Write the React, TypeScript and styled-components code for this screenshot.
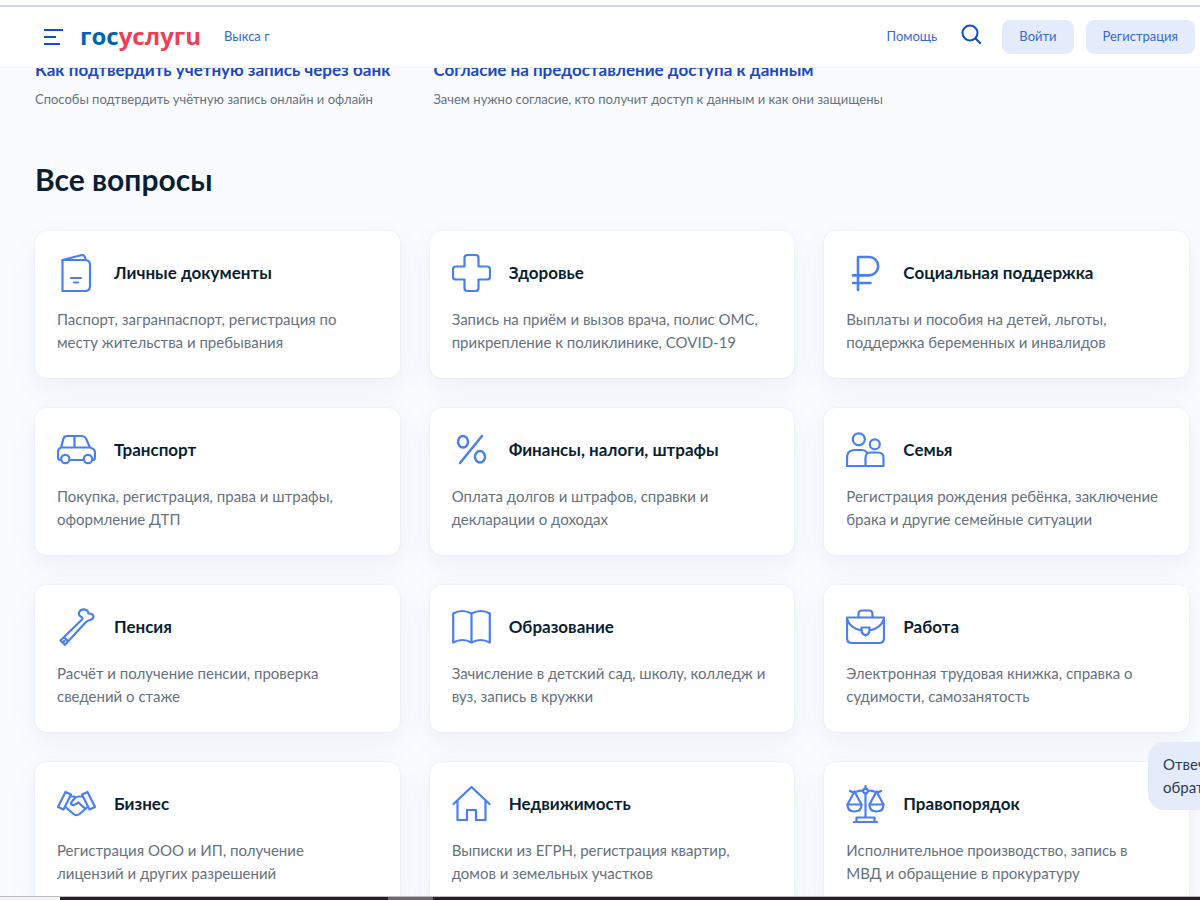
import React from "react";
import styled, { createGlobalStyle } from "styled-components";

const GlobalStyle = createGlobalStyle`
  *, *::before, *::after { box-sizing: border-box; }
  html, body { height: 100%; }
  body {
    margin: 0;
    overflow: hidden;
    background: #fafbff;
    color: #0b1f33;
    font-family: Lato, "Liberation Sans", sans-serif;
  }
  #root { height: 100%; }
  a { color: inherit; text-decoration: none; }
  h1, h2, h3, p { margin: 0; }
`;

const Page = styled.div`
  display: flex;
  flex-direction: column;
  height: 100%;
  overflow: hidden;
`;

const Header = styled.header`
  position: relative;
  z-index: 2;
  flex: none;
  display: flex;
  align-items: center;
  height: 68px;
  padding: 6px 5px 0 43px;
  background: #fff;
  border-bottom: 1px solid #eff3f8;

  &::before {
    content: "";
    position: absolute;
    inset: 5px 0 auto;
    height: 2px;
    background: #d3d9e2;
  }
`;

const MenuButton = styled.button`
  display: flex;
  padding: 0;
  border: 0;
  background: none;
  color: #0d4cd3;
  cursor: pointer;
`;

const Logo = styled.a`
  margin-left: 17px;
  padding-bottom: 2px;
  color: #ee3f58;
  font: 700 24px/32px "Open Sans", "Noto Sans", sans-serif;
`;

const LogoBlue = styled.span`
  color: #0065b1;
`;

const HeaderLink = styled.a`
  padding-bottom: 2px;
  color: #3a68d4;
  font-size: 13px;
  line-height: 20px;
`;

const Region = styled(HeaderLink)`
  margin-left: 23px;
`;

const Actions = styled.nav`
  display: flex;
  align-items: center;
  margin-left: auto;
`;

const SearchButton = styled(MenuButton)`
  margin: 0 20px 4px 24px;
`;

const PillButton = styled.button`
  height: 34px;
  padding: 0 17px 2px;
  border: 0;
  border-radius: 8px;
  background: #e4ecfb;
  color: #3a68d4;
  font: 400 13px/20px Lato, "Liberation Sans", sans-serif;
  cursor: pointer;

  & + & { margin-left: 12px; }
`;

const Main = styled.main`
  flex: 1;
  min-height: 0;
  overflow: hidden;
  padding: 0 11px 0 35px;
`;

const Popular = styled.section`
  display: flex;
  gap: 43px;
  margin-top: -10px;
`;

const PopularTitle = styled.h3`
  color: #1d48c4;
  font-size: 17px;
  font-weight: 700;
  line-height: 24px;
`;

const PopularText = styled.p`
  margin-top: 7px;
  color: #66727f;
  font-size: 13px;
  line-height: 20px;
`;

const SectionTitle = styled.h2`
  margin: 49px 0 31px;
  font-size: 30px;
  font-weight: 700;
  line-height: 42px;
`;

const Grid = styled.div`
  display: grid;
  grid-template-columns: repeat(3, minmax(0, 1fr));
  gap: 30px;
`;

const Card = styled.a`
  display: block;
  padding: 23px 22px 24px;
  border-radius: 12px;
  background: #fff;
  box-shadow: 0 0 2px rgba(60, 90, 140, 0.12), 0 10px 28px rgba(60, 100, 160, 0.07);
`;

const CardHead = styled.div`
  display: flex;
  align-items: center;
  gap: 18px;
`;

const CardTitle = styled.h3`
  font-size: 17px;
  font-weight: 700;
  line-height: 24px;
`;

const CardText = styled.p`
  margin-top: 16px;
  color: #66727f;
  font-size: 15px;
  line-height: 23px;
`;

const IconSvg = styled.svg`
  flex: none;
  width: 39px;
  height: 38px;
  fill: none;
  stroke: #4a7ff0;
  stroke-width: 2.2;
  stroke-linecap: round;
  stroke-linejoin: round;
`;

const Chat = styled.aside`
  position: fixed;
  z-index: 3;
  right: 0;
  bottom: 90px;
  width: 52px;
  height: 68px;
  padding: 11px 0 0 15px;
  overflow: hidden;
  border-radius: 16px 0 0 16px;
  background: #e4ecfb;
  color: #2b3c50;
  font-size: 15px;
  line-height: 23px;
  white-space: nowrap;
`;

const BottomEdge = styled.div`
  position: relative;
  z-index: 4;
  flex: none;
  display: flex;
  height: 4px;
  background: #231f23;
  border-top: 1px solid #b9bbbf;
`;

const EdgePart = styled.span<{ $width: number; $color: string }>`
  width: ${(p) => p.$width}px;
  background: ${(p) => p.$color};
`;

type Item = { title: string; lines: [string, string]; icon: React.ReactNode };

const items: Item[] = [
  {
    title: "Личные документы",
    lines: ["Паспорт, загранпаспорт, регистрация по", "месту жительства и пребывания"],
    icon: (
      <>
        <path d="M5.5 6H28q5 0 5 5v21q0 5-5 5H5.5z" />
        <path d="M5.5 6 24 1.2q3-.7 3.9 1.800l1 3M14 24h10M17 28.500h4" />
      </>
    ),
  },
  {
    title: "Здоровье",
    lines: ["Запись на приём и вызов врача, полис ОМС,", "прикрепление к поликлинике, COVID-19"],
    icon: (
      <path d="M15.500 1h8q3 0 3 3v8.500H35q3 0 3 3v7q0 3-3 3h-8.500V34q0 3-3 3h-8q-3 0-3-3v-8.500H4q-3 0-3-3v-7q0-3 3-3h8.500V4q0-3 3-3z" />
    ),
  },
  {
    title: "Социальная поддержка",
    lines: ["Выплаты и пособия на детей, льготы,", "поддержка беременных и инвалидов"],
    icon: <path strokeWidth="2.600" d="M12 36V3h11a9.200 9.200 0 0 1 0 18.400H7M7 29h17.500" />,
  },
  {
    title: "Транспорт",
    lines: ["Покупка, регистрация, права и штрафы,", "оформление ДТП"],
    icon: (
      <>
        <path d="M4 29H3q-2 0-2-3v-5q0-3.500 3-4.500L6.500 7.500Q7.300 5 10 5h15q2.500 0 4 2.500l4 9q5 1.500 5 5v4.500q0 3-2.500 3M12.800 29h13.700M4 16.500h29M17.500 5.500v11" />
        <circle cx="8.300" cy="28" r="4.200" />
        <circle cx="31" cy="28" r="4.200" />
      </>
    ),
  },
  {
    title: "Финансы, налоги, штрафы",
    lines: ["Оплата долгов и штрафов, справки и", "декларации о доходах"],
    icon: (
      <g strokeWidth="2.500">
        <path d="M30 5 8 32" />
        <ellipse cx="11" cy="10.800" rx="5" ry="5.800" />
        <ellipse cx="28" cy="25.800" rx="5" ry="5.800" />
      </g>
    ),
  },
  {
    title: "Семья",
    lines: ["Регистрация рождения ребёнка, заключение", "брака и другие семейные ситуации"],
    icon: (
      <>
        <circle cx="12.800" cy="8.300" r="6" />
        <circle cx="28.800" cy="13.300" r="5" />
        <path d="M1 35V27q0-8 8-8h7q3 0 5 2.500M1 35h36.500V27q0-5.500-5.500-5.500h-7.500q-5 0-5 5.500v8" />
      </>
    ),
  },
  {
    title: "Пенсия",
    lines: ["Расчёт и получение пенсии, проверка", "сведений о стаже"],
    icon: (
      <path d="M3.500 32.500 24.500 12Q26.500 9.800 24 8.800 21.500 7.800 22 4.800 23 1.300 27 1.300 31 1.800 31.500 5.500 36 5.300 36.500 8.300 36.500 11 33 12 30.500 12.300 28.500 14.500L8 36.800zM7 29.200l4.300 4.200M7 33.200h.5" />
    ),
  },
  {
    title: "Образование",
    lines: ["Зачисление в детский сад, школу, колледж и", "вуз, запись в кружки"],
    icon: (
      <path d="M19.500 5.500Q10 .5 1.200 5.500v29q9.300-5 18.300 0 9-5 18.300 0v-29Q29 .5 19.500 5.500zV34.500" />
    ),
  },
  {
    title: "Работа",
    lines: ["Электронная трудовая книжка, справка о", "судимости, самозанятость"],
    icon: (
      <>
        <path d="M1 9.500h37V30q0 5-5 5H6q-5 0-5-5zM12.500 9V6q0-3.500 3.500-3.500h7q3.500 0 3.500 3.500v3" />
        <path d="M1 11q3 9 14.500 11.500M38 11q-3 9-14.500 11.500M15.500 19.500h8V23q-.5 3-4 4.500-3.500-1.500-4-4.500z" />
      </>
    ),
  },
  {
    title: "Бизнес",
    lines: ["Регистрация ООО и ИП, получение", "лицензий и других разрешений"],
    icon: (
      <>
        <path d="M8.500 7 14 9.500 6.500 24.500 1 22zM30.500 7 25 9.500 32.500 24.500 38 22z" />
        <path d="M13 11.500h4.500M26 11.500h-4.500q-2 0-3.500 1.500l-3.500 4q-1 2 .5 2.800 2 .8 4-.8l2.500-1.500 7 6.500M8.500 22l8 7q3 2.400 6 0l8-7" />
      </>
    ),
  },
  {
    title: "Недвижимость",
    lines: ["Выписки из ЕГРН, регистрация квартир,", "домов и земельных участков"],
    icon: (
      <path d="M1.500 19 19.500 2 37.500 19M5.500 16v19H15V25h9v10h9.500V16" />
    ),
  },
  {
    title: "Правопорядок",
    lines: ["Исполнительное производство, запись в", "МВД и обращение в прокуратуру"],
    icon: (
      <>
        <path d="M19.500 1v3M19.500 8.500V32M4 6q3 2 7 .5 3-1.500 6-.5M35 6q-3 2-7 .5-3-1.500-6-.5M8.500 6.500 1.500 19.500h14zM30.500 6.500l-7 13h14z" />
        <path d="M1.500 19.500q0 7 7 7t7-7M23.500 19.500q0 7 7 7t7-7M10.500 32.500h18V37M10.500 32.500V37M8 37.200h23" />
        <circle cx="19.500" cy="6" r="2.300" />
      </>
    ),
  },
];

const popular = [
  {
    title: "Как подтвердить учётную запись через банк",
    text: "Способы подтвердить учётную запись онлайн и офлайн",
  },
  {
    title: "Согласие на предоставление доступа к данным",
    text: "Зачем нужно согласие, кто получит доступ к данным и как они защищены",
  },
];

export default function App() {
  return (
    <Page>
      <GlobalStyle />
      <Header>
        <MenuButton type="button" aria-label="Меню">
          <svg width="20" height="18" viewBox="0 0 20 18" stroke="currentColor" strokeWidth="2">
            <path d="M1 2h19M1 9h12M1 16h16" />
          </svg>
        </MenuButton>
        <Logo href="#" aria-label="Госуслуги">
          <LogoBlue>гос</LogoBlue>услугu
        </Logo>
        <Region href="#">Выкса г</Region>
        <Actions>
          <HeaderLink href="#">Помощь</HeaderLink>
          <SearchButton type="button" aria-label="Поиск">
            <svg width="21" height="21" viewBox="0 0 21 21" fill="none" stroke="currentColor" strokeWidth="2">
              <circle cx="9" cy="9" r="7.500" />
              <path d="m14.300 14.300 5.500 5.500" />
            </svg>
          </SearchButton>
          <PillButton type="button">Войти</PillButton>
          <PillButton type="button">Регистрация</PillButton>
        </Actions>
      </Header>
      <Main>
        <Popular>
          {popular.map((p) => (
            <a href="#" key={p.title}>
              <PopularTitle>{p.title}</PopularTitle>
              <PopularText>{p.text}</PopularText>
            </a>
          ))}
        </Popular>
        <SectionTitle>Все вопросы</SectionTitle>
        <Grid>
          {items.map((item) => (
            <Card href="#" key={item.title}>
              <CardHead>
                <IconSvg viewBox="0 0 39 38" aria-hidden="true">
                  {item.icon}
                </IconSvg>
                <CardTitle>{item.title}</CardTitle>
              </CardHead>
              <CardText>
                {item.lines[0]}
                <br />
                {item.lines[1]}
              </CardText>
            </Card>
          ))}
        </Grid>
      </Main>
      <Chat>
        Отвеч
        <br />
        обрат
      </Chat>
      <BottomEdge>
        <EdgePart $width={60} $color="#f4f4f6" />
        <EdgePart $width={328} $color="#231f23" />
        <EdgePart $width={45} $color="#6b696c" />
      </BottomEdge>
    </Page>
  );
}
